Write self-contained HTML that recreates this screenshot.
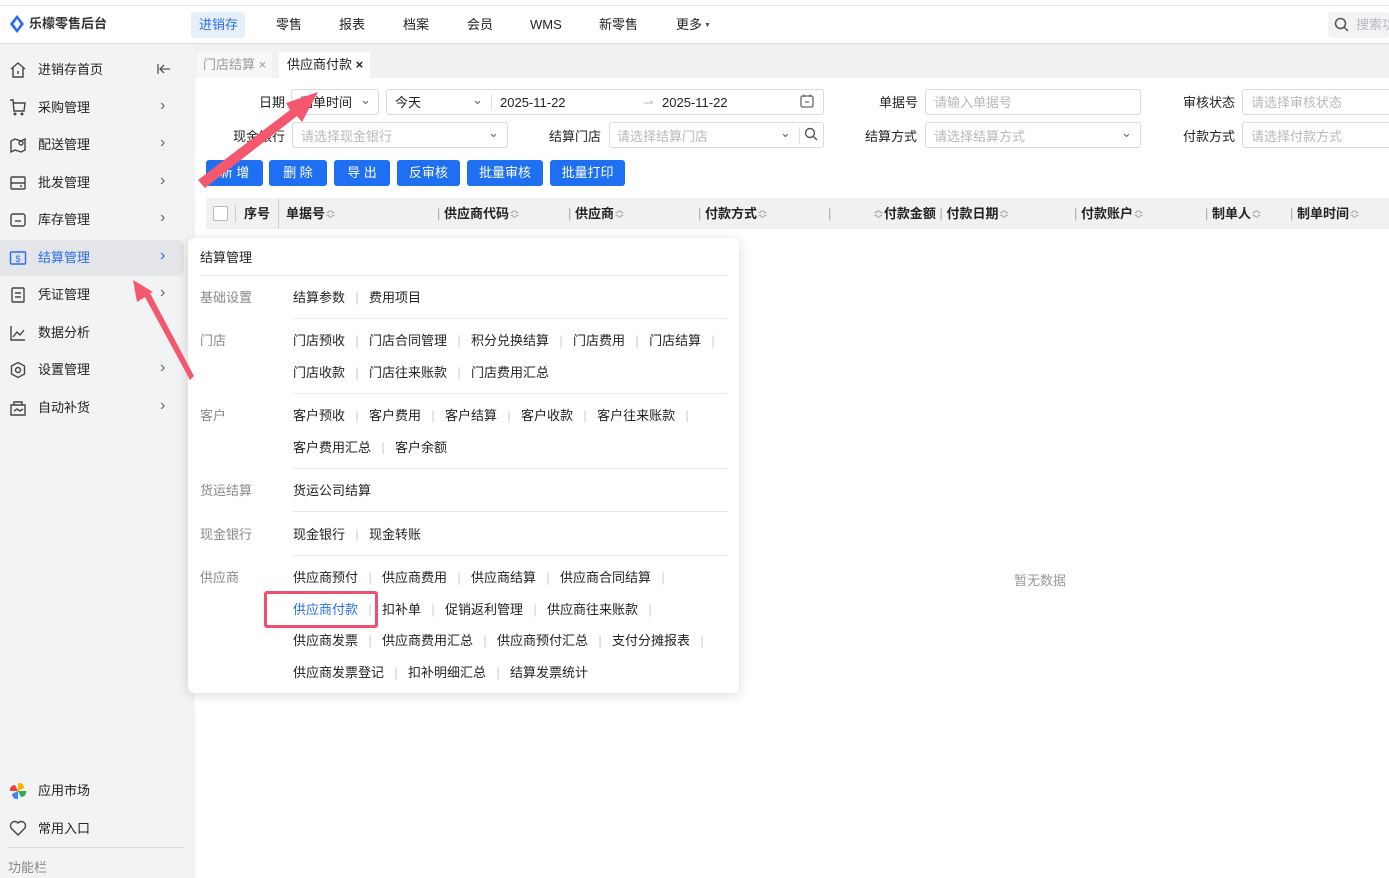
<!DOCTYPE html>
<html><head><meta charset="utf-8"><style>
*{box-sizing:border-box;margin:0;padding:0}
body{width:1389px;height:878px;overflow:hidden;font-family:"Liberation Sans","Noto Sans CJK SC",sans-serif;font-size:13px;line-height:15px;color:#222;background:#fff;position:relative}
.a{position:absolute;white-space:nowrap}
.hdr{left:0;top:5px;width:1389px;height:39px;border-top:1px solid #e3e4e6;border-bottom:1px solid #dcdde0;background:#fff}
.nav{top:17px;font-size:13px;color:#222}
.side{left:0;top:44px;width:195px;height:834px;background:#f2f3f5}
.si{left:38px;font-size:13px;color:#222}
.ico{position:absolute;left:9px}
.chev{left:160px;color:#666;font-size:16px}
.inp{border:1px solid #d9dbdf;border-radius:3px;height:26px;background:#fff}
.ph{color:#b5b8bd;font-size:13px}
.btn{top:160px;height:26px;background:#1f6ff2;color:#fff;border-radius:3px;text-align:center;line-height:26px;font-size:13px}
.th{top:206px;font-weight:bold;font-size:13px;color:#222}
.pop{left:188px;top:238px;width:551px;height:455px;background:#fff;border-radius:6px;box-shadow:0 2px 12px rgba(0,0,0,.15)}
.lbl{color:#888;font-size:13px}
.it{font-size:13px;color:#222}
.sep{display:inline-block;width:24px;text-align:center;color:#ccc}
.hl{left:200px;height:1px;background:#e5e6e8}
.so{color:#aaa;font-weight:normal}
</style></head><body>
<div class="a hdr"></div>
<svg class="a" style="left:10px;top:15px" width="14" height="18" viewBox="0 0 14 18"><path d="M7 0 L14 9 L7 18 L0 9Z" fill="#2a6cf0"/><path d="M7 4 L10.5 9 L7 14 L3.5 9Z" fill="#fff"/></svg>
<div class="a" style="left:29px;top:16px;font-weight:bold;font-size:13px;color:#333">乐檬零售后台</div>
<div class="a" style="left:191px;top:12px;width:54px;height:26px;background:#e7eefc;border-radius:3px"></div>
<div class="a nav" style="left:199px;color:#2a6cf0">进销存</div>
<div class="a nav" style="left:276px">零售</div>
<div class="a nav" style="left:339px">报表</div>
<div class="a nav" style="left:403px">档案</div>
<div class="a nav" style="left:467px">会员</div>
<div class="a nav" style="left:530px">WMS</div>
<div class="a nav" style="left:599px">新零售</div>
<div class="a nav" style="left:676px">更多<span style="font-size:7px;color:#555;vertical-align:2px"> ▼</span></div>
<div class="a" style="left:1328px;top:12px;width:61px;height:26px;background:#f2f3f5;border-radius:3px"></div>
<svg class="a" style="left:1334px;top:17px" width="15" height="15" viewBox="0 0 15 15"><circle cx="6.5" cy="6.5" r="5" fill="none" stroke="#555" stroke-width="1.5"/><path d="M10 10 L14 14" stroke="#555" stroke-width="1.5"/></svg>
<div class="a ph" style="left:1356px;top:17px">搜索功</div>

<div class="a side"></div>
<div class="a" style="left:0;top:240px;width:184px;height:36px;background:#e4e5e8;border-radius:0 6px 6px 0"></div>
<svg class="ico" style="top:61px" width="18" height="18" viewBox="0 0 18 18" fill="none" stroke="#444" stroke-width="1.4"><path d="M2 8 L9 2 L16 8 M4 7 V16 H14 V7 M9 10 V13"/></svg>
<div class="a si" style="top:62px">进销存首页</div>
<svg class="a" style="left:157px;top:63px" width="14" height="12" viewBox="0 0 14 12" fill="none" stroke="#555" stroke-width="1.3"><path d="M13 6 H3 M7 2 L3 6 L7 10 M1 1 V11"/></svg>
<svg class="ico" style="top:98px" width="18" height="18" viewBox="0 0 18 18" fill="none" stroke="#444" stroke-width="1.4"><path d="M1 2 H4 L5 13 H15 L16 5 H5"/><circle cx="6" cy="16" r="0.8" fill="#444"/><circle cx="13" cy="16" r="0.8" fill="#444"/></svg>
<div class="a si" style="top:100px">采购管理</div><div class="a chev" style="top:98px">›</div>
<svg class="ico" style="top:136px" width="18" height="18" viewBox="0 0 18 18" fill="none" stroke="#444" stroke-width="1.4"><path d="M2 5 L6 3 L12 5 L16 3 V14 L12 16 L6 14 L2 16Z"/><circle cx="12" cy="7" r="2"/></svg>
<div class="a si" style="top:137px">配送管理</div><div class="a chev" style="top:135px">›</div>
<svg class="ico" style="top:174px" width="18" height="18" viewBox="0 0 18 18" fill="none" stroke="#444" stroke-width="1.4"><rect x="2" y="3" width="14" height="12" rx="1"/><path d="M2 9 H16 M11 12 H13"/></svg>
<div class="a si" style="top:175px">批发管理</div><div class="a chev" style="top:173px">›</div>
<svg class="ico" style="top:211px" width="18" height="18" viewBox="0 0 18 18" fill="none" stroke="#444" stroke-width="1.4"><rect x="2" y="3" width="14" height="12" rx="2"/><path d="M6 10 H12"/></svg>
<div class="a si" style="top:212px">库存管理</div><div class="a chev" style="top:210px">›</div>
<svg class="ico" style="top:249px" width="18" height="18" viewBox="0 0 18 18" fill="none" stroke="#2a6cf0" stroke-width="1.4"><rect x="1.5" y="3" width="15" height="12" rx="1"/><text x="9" y="13" font-size="9" text-anchor="middle" fill="#2a6cf0" stroke="none" font-family="Liberation Sans">$</text></svg>
<div class="a si" style="top:250px;color:#2a6cf0">结算管理</div><div class="a chev" style="top:248px;color:#2a6cf0">›</div>
<svg class="ico" style="top:286px" width="18" height="18" viewBox="0 0 18 18" fill="none" stroke="#444" stroke-width="1.4"><rect x="3" y="2" width="12" height="14" rx="1"/><path d="M6 7 H12 M6 11 H12"/></svg>
<div class="a si" style="top:287px">凭证管理</div><div class="a chev" style="top:285px">›</div>
<svg class="ico" style="top:324px" width="18" height="18" viewBox="0 0 18 18" fill="none" stroke="#444" stroke-width="1.4"><path d="M2 2 V16 H16 M4 13 L8 8 L11 11 L15 6"/></svg>
<div class="a si" style="top:325px">数据分析</div>
<svg class="ico" style="top:361px" width="18" height="18" viewBox="0 0 18 18" fill="none" stroke="#444" stroke-width="1.4"><path d="M9 1.5 L15.5 5 V13 L9 16.5 L2.5 13 V5Z"/><circle cx="9" cy="9" r="2.5"/></svg>
<div class="a si" style="top:362px">设置管理</div><div class="a chev" style="top:360px">›</div>
<svg class="ico" style="top:399px" width="18" height="18" viewBox="0 0 18 18" fill="none" stroke="#444" stroke-width="1.4"><path d="M5 6 V3 H13 V6 M2 6 H16 V16 H2Z M5 12 L8 10 L11 12 L14 10"/></svg>
<div class="a si" style="top:400px">自动补货</div><div class="a chev" style="top:398px">›</div>
<svg class="a" style="left:9px;top:782px" width="18" height="18" viewBox="0 0 18 18"><path d="M9 9 L9 1 A5 5 0 0 1 15 6Z" fill="#f5b400"/><path d="M9 9 L17 9 A5 5 0 0 1 12 15Z" fill="#34a853"/><path d="M9 9 L9 17 A5 5 0 0 1 3 12Z" fill="#4285f4"/><path d="M9 9 L1 9 A5 5 0 0 1 6 3Z" fill="#ea4335"/></svg>
<div class="a si" style="top:783px">应用市场</div>
<svg class="ico" style="top:820px" width="18" height="16" viewBox="0 0 18 16" fill="none" stroke="#444" stroke-width="1.4"><path d="M9 15 L2.5 8.5 A3.8 3.8 0 0 1 9 3 A3.8 3.8 0 0 1 15.5 8.5Z"/></svg>
<div class="a si" style="top:821px">常用入口</div>
<div class="a" style="left:7px;top:847px;width:177px;height:1px;background:#dcdde0"></div>
<div class="a" style="left:8px;top:860px;color:#888">功能栏</div>

<div class="a" style="left:195px;top:44px;width:1194px;height:34px;background:#f0f1f3"></div>
<div class="a" style="left:197px;top:52px;width:75px;height:26px;background:#f7f7f8"></div>
<div class="a" style="left:203px;top:57px;color:#999">门店结算 ×</div>
<div class="a" style="left:279px;top:52px;width:91px;height:26px;background:#fff"></div>
<div class="a" style="left:287px;top:57px;color:#222">供应商付款 <b>×</b></div>

<div class="a" style="left:259px;top:95px">日期</div>
<div class="a inp" style="left:291px;top:89px;width:88px"></div><div class="a" style="left:300px;top:95px">制单时间</div><div class="a" style="left:360px;top:92px;color:#666">⌄</div>
<div class="a inp" style="left:386px;top:89px;width:438px"></div>
<div class="a" style="left:395px;top:95px">今天</div><div class="a" style="left:472px;top:92px;color:#666">⌄</div>
<div class="a" style="left:491px;top:94px;width:1px;height:16px;background:#ddd"></div>
<div class="a" style="left:500px;top:95px">2025-11-22</div>
<div class="a" style="left:643px;top:95px;color:#bbb">⇀</div>
<div class="a" style="left:662px;top:95px">2025-11-22</div>
<svg class="a" style="left:800px;top:94px" width="14" height="14" viewBox="0 0 14 14" fill="none" stroke="#666" stroke-width="1.3"><rect x="1" y="2" width="12" height="11" rx="1.5"/><path d="M4 0.5 V3 M10 0.5 V3 M5 8 H9"/></svg>
<div class="a" style="left:879px;top:95px">单据号</div>
<div class="a inp" style="left:925px;top:89px;width:216px"></div><div class="a ph" style="left:934px;top:95px">请输入单据号</div>
<div class="a" style="left:1183px;top:95px">审核状态</div>
<div class="a inp" style="left:1242px;top:89px;width:160px"></div><div class="a ph" style="left:1251px;top:95px">请选择审核状态</div>

<div class="a" style="left:233px;top:129px">现金银行</div>
<div class="a inp" style="left:292px;top:122px;width:216px"></div><div class="a ph" style="left:301px;top:129px">请选择现金银行</div><div class="a" style="left:488px;top:125px;color:#666">⌄</div>
<div class="a" style="left:549px;top:129px">结算门店</div>
<div class="a inp" style="left:609px;top:122px;width:215px"></div><div class="a ph" style="left:617px;top:129px">请选择结算门店</div><div class="a" style="left:780px;top:125px;color:#666">⌄</div>
<div class="a" style="left:799px;top:127px;width:1px;height:16px;background:#ddd"></div>
<svg class="a" style="left:804px;top:127px" width="14" height="14" viewBox="0 0 14 14" fill="none" stroke="#555" stroke-width="1.4"><circle cx="6" cy="6" r="4.5"/><path d="M9.5 9.5 L13 13"/></svg>
<div class="a" style="left:865px;top:129px">结算方式</div>
<div class="a inp" style="left:925px;top:122px;width:216px"></div><div class="a ph" style="left:934px;top:129px">请选择结算方式</div><div class="a" style="left:1121px;top:125px;color:#666">⌄</div>
<div class="a" style="left:1183px;top:129px">付款方式</div>
<div class="a inp" style="left:1242px;top:122px;width:160px"></div><div class="a ph" style="left:1251px;top:129px">请选择付款方式</div>

<div class="a btn" style="left:206px;width:57px">新 增</div>
<div class="a btn" style="left:269px;width:58px">删 除</div>
<div class="a btn" style="left:334px;width:56px">导 出</div>
<div class="a btn" style="left:397px;width:63px">反审核</div>
<div class="a btn" style="left:467px;width:76px">批量审核</div>
<div class="a btn" style="left:550px;width:75px">批量打印</div>

<div class="a" style="left:206px;top:198px;width:1183px;height:31px;background:#f0f1f3"></div>
<div class="a" style="left:213px;top:206px;width:15px;height:15px;border:1px solid #bbb;background:#fff;border-radius:2px"></div>
<div class="a" style="left:235px;top:205px;width:1px;height:17px;background:#ccc"></div>
<div class="a th" style="left:244px">序号</div>
<div class="a" style="left:278px;top:199px;width:1px;height:30px;background:#ccc"></div>
<div class="a th" style="left:286px">单据号<span class="so">≎</span></div>
<div class="a th" style="left:437px"><span class="so">|</span> 供应商代码<span class="so">≎</span></div>
<div class="a th" style="left:568px"><span class="so">|</span> 供应商<span class="so">≎</span></div>
<div class="a th" style="left:698px"><span class="so">|</span> 付款方式<span class="so">≎</span></div>
<div class="a th" style="left:828px"><span class="so">|</span></div>
<div class="a th" style="left:873px"><span class="so">≎</span>付款金额 <span class="so">|</span> 付款日期<span class="so">≎</span></div>
<div class="a th" style="left:1074px"><span class="so">|</span> 付款账户<span class="so">≎</span></div>
<div class="a th" style="left:1205px"><span class="so">|</span> 制单人<span class="so">≎</span></div>
<div class="a th" style="left:1290px"><span class="so">|</span> 制单时间<span class="so">≎</span></div>
<div class="a" style="left:1014px;top:573px;color:#999">暂无数据</div>

<div class="a pop"></div>
<div class="a" style="left:200px;top:250px;font-size:13px">结算管理</div>
<div class="a hl" style="top:275px;width:527px"></div>
<div class="a lbl" style="left:200px;top:290px">基础设置</div>
<div class="a it" style="left:293px;top:290px">结算参数<span class="sep">|</span>费用项目</div>
<div class="a hl" style="left:293px;top:318px;width:434px"></div>
<div class="a lbl" style="left:200px;top:333px">门店</div>
<div class="a it" style="left:293px;top:333px">门店预收<span class="sep">|</span>门店合同管理<span class="sep">|</span>积分兑换结算<span class="sep">|</span>门店费用<span class="sep">|</span>门店结算<span class="sep">|</span></div>
<div class="a it" style="left:293px;top:365px">门店收款<span class="sep">|</span>门店往来账款<span class="sep">|</span>门店费用汇总</div>
<div class="a hl" style="left:293px;top:393px;width:434px"></div>
<div class="a lbl" style="left:200px;top:408px">客户</div>
<div class="a it" style="left:293px;top:408px">客户预收<span class="sep">|</span>客户费用<span class="sep">|</span>客户结算<span class="sep">|</span>客户收款<span class="sep">|</span>客户往来账款<span class="sep">|</span></div>
<div class="a it" style="left:293px;top:440px">客户费用汇总<span class="sep">|</span>客户余额</div>
<div class="a hl" style="left:293px;top:468px;width:434px"></div>
<div class="a lbl" style="left:200px;top:483px">货运结算</div>
<div class="a it" style="left:293px;top:483px">货运公司结算</div>
<div class="a hl" style="left:293px;top:511px;width:434px"></div>
<div class="a lbl" style="left:200px;top:527px">现金银行</div>
<div class="a it" style="left:293px;top:527px">现金银行<span class="sep">|</span>现金转账</div>
<div class="a hl" style="left:293px;top:555px;width:434px"></div>
<div class="a lbl" style="left:200px;top:570px">供应商</div>
<div class="a it" style="left:293px;top:570px">供应商预付<span class="sep">|</span>供应商费用<span class="sep">|</span>供应商结算<span class="sep">|</span>供应商合同结算<span class="sep">|</span></div>
<div class="a it" style="left:293px;top:602px"><span style="color:#2a6cf0">供应商付款</span><span class="sep">|</span>扣补单<span class="sep">|</span>促销返利管理<span class="sep">|</span>供应商往来账款<span class="sep">|</span></div>
<div class="a it" style="left:293px;top:633px">供应商发票<span class="sep">|</span>供应商费用汇总<span class="sep">|</span>供应商预付汇总<span class="sep">|</span>支付分摊报表<span class="sep">|</span></div>
<div class="a it" style="left:293px;top:665px">供应商发票登记<span class="sep">|</span>扣补明细汇总<span class="sep">|</span>结算发票统计</div>
<div class="a" style="left:264px;top:591px;width:114px;height:37px;border:3px solid #f0506e;border-radius:3px"></div>

<svg class="a" style="left:0;top:0" width="400" height="400" viewBox="0 0 400 400">
<path d="M198 180 L290 110 L286 103 L318 92 L302 122 L297 116 L205 188Z" fill="#f4586f"/>
<path d="M190 380 L145 297 L137 302 L133 280 L153 292 L150 293 L194 376Z" fill="#f4586f"/>
</svg>
</body></html>
